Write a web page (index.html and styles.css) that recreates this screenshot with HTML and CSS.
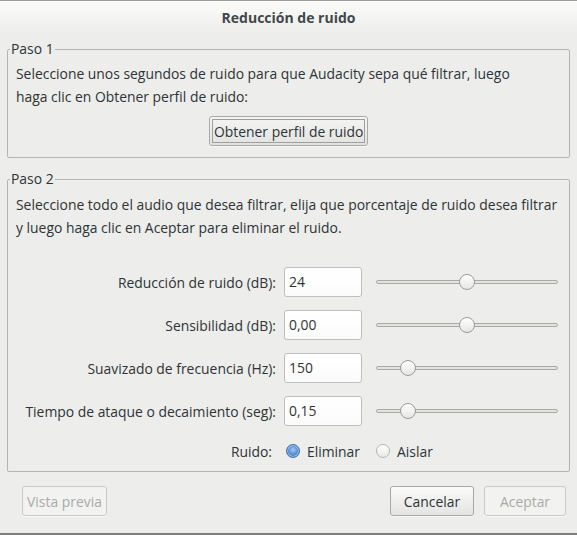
FILE: index.html
```html
<!DOCTYPE html>
<html lang="es">
<head>
<meta charset="utf-8">
<title>Reducción de ruido</title>
<link rel="stylesheet" href="styles.css">
</head>
<body>
<div class="window">
  <header class="titlebar">Reducción de ruido</header>
  <main class="content">
    <fieldset class="group group-1">
      <legend class="legend">Paso 1</legend>
      <p class="desc">Seleccione unos segundos de ruido para que Audacity sepa qué filtrar, luego<br>haga clic en Obtener perfil de ruido:</p>
      <div class="center"><button class="btn btn-focus">Obtener perfil de ruido</button></div>
    </fieldset>
    <fieldset class="group group-2">
      <legend class="legend">Paso 2</legend>
      <p class="desc">Seleccione todo el audio que desea filtrar, elija que porcentaje de ruido desea filtrar<br>y luego haga clic en Aceptar para eliminar el ruido.</p>
      <div class="params">
        <span class="plabel">Reducción de ruido (dB):</span>
        <div class="entry">24</div>
        <div class="slider"><div class="track"></div><div class="thumb" style="left:50%"></div></div>

        <span class="plabel">Sensibilidad (dB):</span>
        <div class="entry">0,00</div>
        <div class="slider"><div class="track"></div><div class="thumb" style="left:50%"></div></div>

        <span class="plabel">Suavizado de frecuencia (Hz):</span>
        <div class="entry">150</div>
        <div class="slider"><div class="track"></div><div class="thumb" style="left:17.6%"></div></div>

        <span class="plabel">Tiempo de ataque o decaimiento (seg):</span>
        <div class="entry">0,15</div>
        <div class="slider"><div class="track"></div><div class="thumb" style="left:17.6%"></div></div>

        <span class="plabel plabel-radio">Ruido:</span>
        <div class="radios">
          <span class="radio-item"><span class="radio radio-on"></span>Eliminar</span>
          <span class="radio-item"><span class="radio"></span>Aislar</span>
        </div>
      </div>
    </fieldset>
    <div class="actions">
      <button class="btn btn-disabled btn-preview">Vista previa</button>
      <span class="spacer"></span>
      <button class="btn btn-cancel">Cancelar</button>
      <button class="btn btn-disabled btn-ok">Aceptar</button>
    </div>
  </main>
</div>
</body>
</html>
```

FILE: styles.css
```css
* { box-sizing: border-box; }

html, body {
  margin: 0;
  padding: 0;
  background: #ededeb;
}

body {
  font-family: "Open Sans", "Noto Sans", sans-serif;
  font-size: 13.9px;
  color: #2e3436;
}

.window {
  width: 577px;
  height: 535px;
  border-top: 1px solid #9c9d9b;
  border-bottom: 2px solid #7d7e7c;
  background: #ededeb;
  display: flex;
  flex-direction: column;
}

.titlebar {
  height: 33px;
  flex: none;
  text-align: center;
  font-weight: bold;
  font-size: 14px;
  line-height: 31px;
  color: #42474a;
  background: linear-gradient(#fbfbfa, #efefed 80%, #ededeb);
  border-top: 1px solid #ffffff;
}

.content {
  padding: 6px 7px 0 7px;
}

.group {
  margin: 0;
  padding: 4px 8px 11px 8px;
  border: 1px solid #b4b5b2;
  border-radius: 2px;
  min-width: 0;
}

.legend {
  margin-left: -6px;
  padding: 0 1px;
  line-height: 18px;
}

.group-2 {
  margin-top: 12px;
  padding-top: 5px;
  padding-bottom: 8px;
}

.desc {
  margin: 0;
  line-height: 23px;
  white-space: nowrap;
}

.center {
  display: flex;
  justify-content: center;
  margin-top: 8px;
}

.btn {
  font: inherit;
  color: #2e3436;
  height: 30px;
  padding: 0 4px;
  border: 1px solid #a8a9a6;
  border-radius: 3px;
  background: linear-gradient(#fafaf9, #e4e4e2);
  box-shadow: 0 1px 0 rgba(255,255,255,0.6);
  white-space: nowrap;
}

.btn-focus {
  width: 159px;
  outline: 1px solid #9e9f9c;
  outline-offset: -4px;
  background: linear-gradient(#f5f5f4, #e2e2e0);
}

.btn-disabled {
  color: #a9aaa8;
  border-color: #c9cac7;
  background: #f2f2f1;
}

.params {
  display: grid;
  grid-template-columns: 260px 78px 182px;
  column-gap: 8px;
  row-gap: 13px;
  margin-top: 28px;
  align-items: center;
}

.params .slider { margin-left: 6px; width: 182px; }

.plabel {
  text-align: right;
  white-space: nowrap;
}

.entry {
  height: 30px;
  line-height: 28px;
  padding: 0 4px;
  border: 1px solid #bfc0bd;
  border-radius: 3px;
  background: linear-gradient(#ffffff, #fbfbfb);
}

.slider {
  position: relative;
  height: 16px;
  display: flex;
  align-items: center;
}

.track {
  width: 100%;
  height: 4px;
  border: 1px solid #a9aaa6;
  border-radius: 3px;
  background: #e3e3e0;
}

.thumb {
  position: absolute;
  top: 0;
  width: 16px;
  height: 16px;
  margin-left: -8px;
  border-radius: 50%;
  border: 1px solid #9c9d9a;
  background: linear-gradient(#ffffff, #e6e6e4);
}

.plabel-radio { align-self: center; padding-right: 4px; }

.radios {
  grid-column: 2 / 4;
  display: flex;
  align-items: center;
  height: 24px;
  gap: 16px;
  padding-left: 2px;
}

.radio-item {
  display: inline-flex;
  align-items: center;
  gap: 7px;
}

.radio {
  width: 14px;
  height: 14px;
  border-radius: 50%;
  border: 1px solid #b5b6b3;
  background: linear-gradient(#ffffff, #e9e9e7);
}

.radio-on {
  border-color: #3f6fa8;
  background: radial-gradient(circle at 50% 40%, #a9c9ef 0, #5b93d8 45%, #3a73bd 100%);
  box-shadow: inset 0 0 0 1px rgba(255,255,255,0.45);
}

.actions {
  display: flex;
  align-items: center;
  margin-top: 14px;
  padding: 0 4px 0 15px;
  gap: 10px;
}

.spacer { flex: 1; }

.btn-preview { width: 85px; }
.btn-cancel { width: 84px; }
.btn-ok { width: 82px; }
```
